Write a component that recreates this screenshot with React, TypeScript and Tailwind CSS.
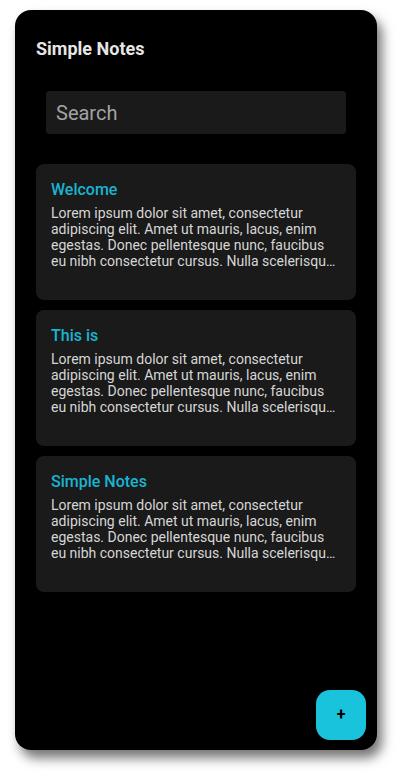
import React from "react";

const lorem =
  "Lorem ipsum dolor sit amet, consectetur adipiscing elit. Amet ut mauris, lacus, enim egestas. Donec pellentesque nunc, faucibus eu nibh consectetur cursus. Nulla scelerisque ultricies nulla, at faucibus massa luctus id.";

const notes = ["Welcome", "This is", "Simple Notes"];

export default function App() {
  return (
    <div className="w-[402px] h-[774px] bg-white pt-[10px] pl-[15px]" style={{ fontFamily: "Roboto, 'Noto Sans', sans-serif" }}>
      <div className="relative w-[362px] h-[740px] bg-black rounded-[16px] shadow-[5px_8px_12px_rgba(0,0,0,0.55)] px-[21px] pt-[28px]">
        <h1 className="text-[18px] leading-[22px] font-bold text-[#e6e6e6]">Simple Notes</h1>
        <div className="mt-[31px] mx-[10px] h-[43px] rounded-[4px] bg-[#1a1a1a] flex items-center px-[10px]">
          <span className="text-[20px] text-[#a3a3a3]">Search</span>
        </div>
        <div className="mt-[30px] flex flex-col gap-[10px]">
          {notes.map((t) => (
            <div key={t} className="h-[136px] rounded-[8px] bg-[#1a1a1a] px-[15px] pt-[15px]">
              <div className="text-[16px] leading-[22px] font-medium text-[#19b4d1]">{t}</div>
              <p className="mt-[4px] text-[14px] leading-[16px] text-[#d6d6d6] line-clamp-4">{lorem}</p>
            </div>
          ))}
        </div>
        <button className="absolute right-[11px] bottom-[10px] w-[50px] h-[50px] rounded-[14px] bg-[#19c3dc] flex items-center justify-center text-black font-bold text-[16px]">
          +
        </button>
      </div>
    </div>
  );
}
